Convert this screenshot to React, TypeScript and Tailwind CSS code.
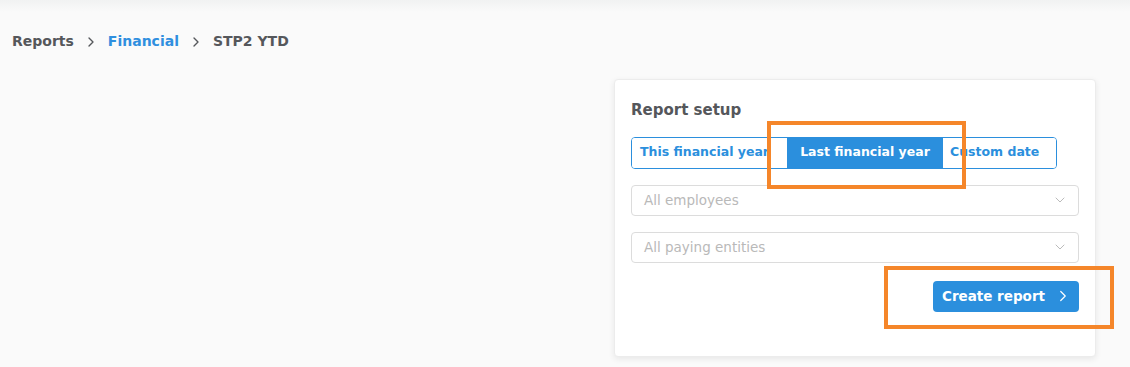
import { ChevronRight, ChevronDown } from 'lucide-react';

const font = { fontFamily: '"DejaVu Sans", "Noto Sans", sans-serif' };

const SelectBox = ({ placeholder }: { placeholder: string }) => (
  <div className="flex h-[31px] items-center justify-between rounded border border-[#dcdcdc] bg-white pl-3 pr-[10px]">
    <span className="text-[13.5px] text-[#b9b9b9]">{placeholder}</span>
    <ChevronDown size={16} strokeWidth={1.2} className="text-[#aaaaaa]" />
  </div>
);

export default function App() {
  return (
    <div className="relative h-[367px] w-full overflow-hidden bg-[#fafafa]" style={font}>
      <div className="absolute left-0 right-0 top-0 h-[12px] bg-gradient-to-b from-[#f1f2f2] to-[#fafafa]" />

      <nav className="relative flex items-center gap-[9px] pl-3 pt-[31px] text-[14px] font-bold text-[#55575b]">
        <span>Reports</span>
        <ChevronRight size={16} strokeWidth={2} className="text-[#55575b]" />
        <span className="text-[#2f8fdf]">Financial</span>
        <ChevronRight size={16} strokeWidth={2} className="text-[#55575b]" />
        <span>STP2 YTD</span>
      </nav>

      <div className="mt-[27px] flex justify-end pr-[34px]">
        <div className="w-[482px] rounded-sm border border-[#ececec] bg-white px-[16px] pb-[44px] pt-[19px] shadow-[0_2px_6px_rgba(0,0,0,0.08)]">
          <h2 className="text-[15px] font-semibold text-[#55575b]">Report setup</h2>

          <div className="mt-[15px] flex h-[32px] w-fit overflow-hidden rounded border border-[#2b8fdd] text-[12.5px] font-semibold">
            <button className="w-[155px] whitespace-nowrap bg-white pl-[8px] text-left text-[#2b8fdd]">This financial year</button>
            <button className="w-[156px] whitespace-nowrap bg-[#2b8fdd] text-white">Last financial year</button>
            <button className="w-[113px] whitespace-nowrap bg-white pl-[7px] text-left text-[#2b8fdd]">Custom date</button>
          </div>

          <div className="mt-4 flex flex-col gap-4">
            <SelectBox placeholder="All employees" />
            <SelectBox placeholder="All paying entities" />
          </div>

          <div className="mt-[18px] flex justify-end">
            <button className="flex h-[31px] items-center gap-[9px] rounded bg-[#2b8fdd] pl-[9px] pr-[7px] text-[13.5px] font-semibold text-white">
              Create report
              <ChevronRight size={18} strokeWidth={1.6} />
            </button>
          </div>
        </div>
      </div>

      <div className="absolute left-[767px] top-[121px] h-[68px] w-[199px] border-4 border-[#f5862a]" />
      <div className="absolute left-[884px] top-[266px] h-[63px] w-[230px] border-4 border-[#f5862a]" />
    </div>
  );
}
